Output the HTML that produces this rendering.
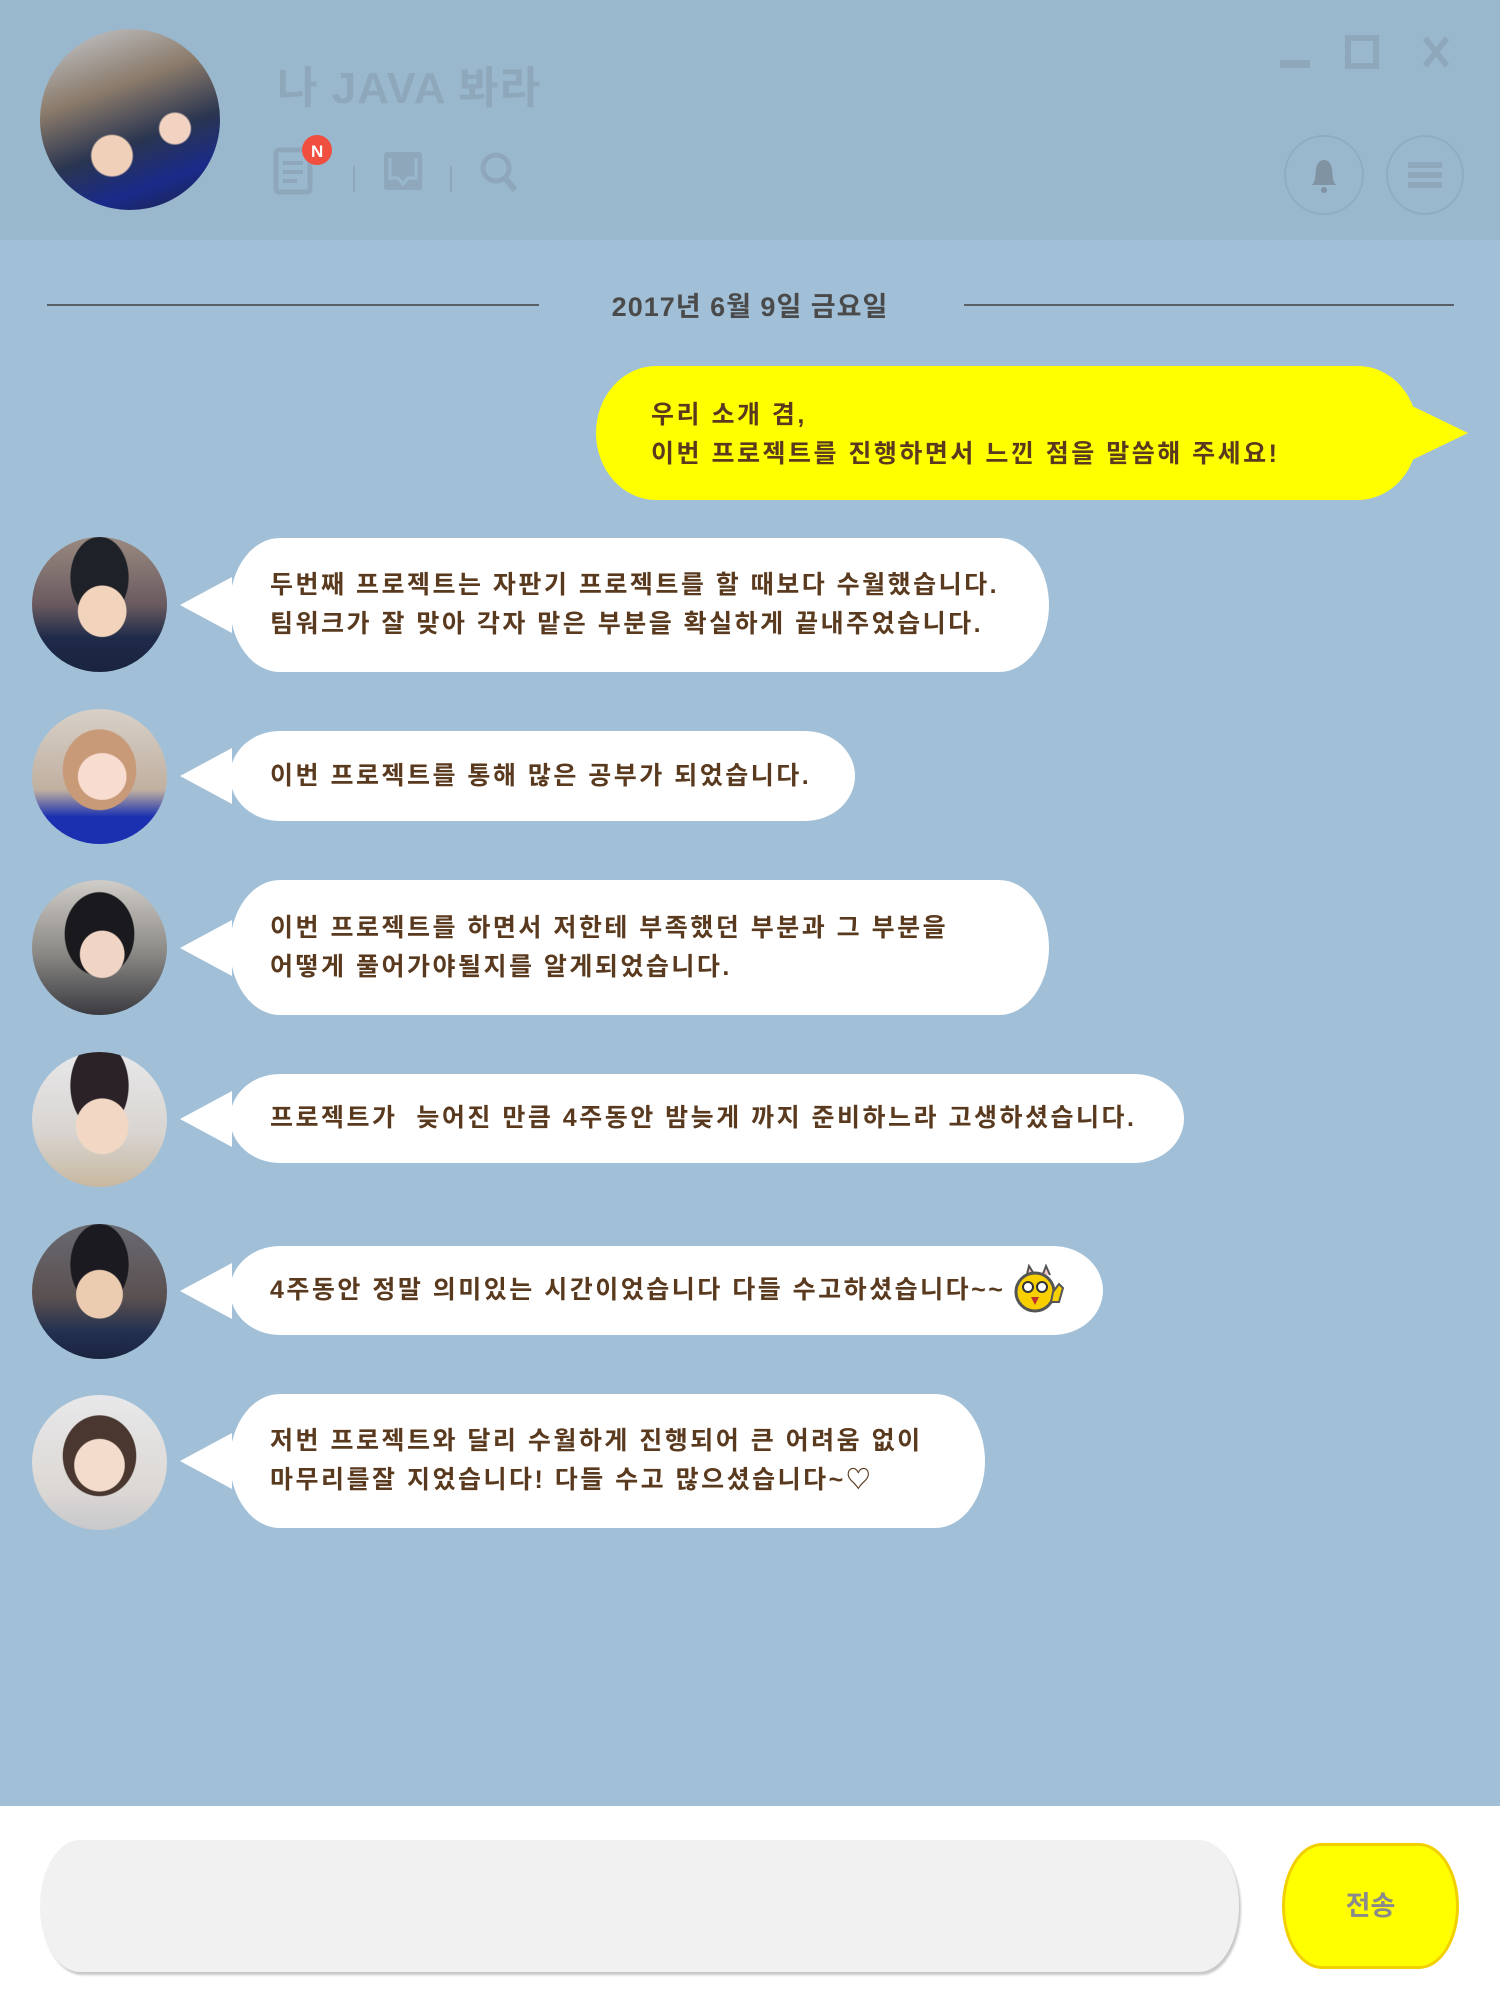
<!DOCTYPE html><html><head><meta charset="utf-8"><style>
*{margin:0;padding:0;box-sizing:border-box}
body{width:1500px;height:2000px;background:#a1c0d8;position:relative;overflow:hidden;font-family:"Liberation Sans","Noto Sans CJK KR",sans-serif}
.hdr{position:absolute;left:0;top:0;width:1500px;height:240px;background:#99b8ce}
.abs{position:absolute}
.av{position:absolute;width:135px;height:135px;border-radius:50%;overflow:hidden}
.b{position:absolute;left:230px;background:#fff;border-radius:50px/50%;color:#5a3a1e;font-weight:700;font-size:25px;line-height:39px;padding-left:40px;display:flex;flex-direction:column;justify-content:center;letter-spacing:2.5px;white-space:nowrap}
.b:before{content:"";position:absolute;left:-50px;top:50%;margin-top:-28px;border-right:52px solid #fff;border-top:28px solid transparent;border-bottom:28px solid transparent}
</style></head><body>
<div class="hdr"></div>
<div class="av" style="left:40px;top:29px;width:180px;height:181px;background:radial-gradient(circle at 40% 70%,#f0d0b8 0 12%,transparent 13%),radial-gradient(circle at 75% 55%,#f2d2c0 0 9%,transparent 10%),linear-gradient(160deg,#c8ccd2 0%,#8a7a6a 35%,#2a3550 60%,#1a2a8a 80%,#1c2440 100%)"></div>
<div class="abs" style="left:277px;top:52px;font-size:44px;font-weight:700;color:#8ea7ba;letter-spacing:1px">나 JAVA 봐라</div>
<svg class="abs" style="left:270px;top:130px" width="300" height="70">
<rect x="6" y="20" width="34" height="42" rx="3" fill="none" stroke="#8ea7ba" stroke-width="5"/>
<path d="M13 33h20M13 42h20M13 51h14" stroke="#8ea7ba" stroke-width="4"/>
<circle cx="47" cy="20" r="15" fill="#f04e3e"/><text x="41" y="27" font-size="17" font-weight="700" fill="#fff" font-family="Liberation Sans">N</text>
<path d="M84 36v26M181 36v26" stroke="#8ea7ba" stroke-width="2"/>
<rect x="114" y="22" width="38" height="38" rx="3" fill="#8ea7ba"/><path d="M120 28v20h8l5 6 5-6h8v-20" fill="none" stroke="#99b8ce" stroke-width="3"/>
<circle cx="226" cy="38" r="13" fill="none" stroke="#8ea7ba" stroke-width="5"/><path d="M235 48l10 12" stroke="#8ea7ba" stroke-width="6"/>
</svg>
<svg class="abs" style="left:1270px;top:30px" width="200" height="50">
<rect x="10" y="30" width="30" height="8" fill="#8ea7ba"/>
<rect x="78" y="8" width="28" height="28" fill="none" stroke="#8ea7ba" stroke-width="6"/>
<path d="M155 8l22 28M177 8l-22 28" stroke="#8ea7ba" stroke-width="6"/>
</svg>
<div class="abs" style="left:1284px;top:135px;width:80px;height:80px;border-radius:50%;border:2px solid #8eacc2"></div>
<svg class="abs" style="left:1284px;top:135px" width="80" height="80"><path d="M28 50c4-4 3-10 4-16 1-6 4-9 8-9s7 3 8 9c1 6 0 12 4 16z" fill="#7f93a3"/><circle cx="40" cy="55" r="3" fill="#7f93a3"/></svg>
<div class="abs" style="left:1386px;top:135px;width:78px;height:80px;border-radius:50%;border:2px solid #8eacc2"></div>
<svg class="abs" style="left:1386px;top:135px" width="78" height="80"><path d="M22 30h34M22 40h34M22 50h34" stroke="#8ea7ba" stroke-width="6"/></svg>

<div class="abs" style="left:47px;top:304px;width:492px;height:2px;background:#5a6068"></div>
<div class="abs" style="left:964px;top:304px;width:490px;height:2px;background:#5a6068"></div>
<div class="abs" style="left:600px;top:285px;width:300px;text-align:center;font-size:27px;font-weight:700;color:#4a4a4a;letter-spacing:1px">2017년 6월 9일 금요일</div>

<div class="abs" style="left:596px;top:366px;width:822px;height:134px;background:#ffff00;border-radius:60px/50%;color:#5a3a1e;font-weight:700;font-size:25px;line-height:39px;padding:30px 0 0 55px;letter-spacing:2.5px;white-space:nowrap">우리 소개 겸,<br>이번 프로젝트를 진행하면서 느낀 점을 말씀해 주세요!</div>
<div class="abs" style="left:1410px;top:405px;border-left:58px solid #ffff00;border-top:28px solid transparent;border-bottom:28px solid transparent"></div>

<div class="av" style="left:32px;top:537px;background:radial-gradient(ellipse at 52% 55%,#f2d4bc 0 24%,transparent 25%),radial-gradient(ellipse at 50% 30%,#1e2228 0 30%,transparent 31%),linear-gradient(180deg,#9a8a80 0%,#6a5a60 50%,#1e2a48 75%,#1a2440 100%)"></div>
<div class="b" style="top:538px;width:819px;height:134px">두번째 프로젝트는 자판기 프로젝트를 할 때보다 수월했습니다.<br>팀워크가 잘 맞아 각자 맡은 부분을 확실하게 끝내주었습니다.</div>

<div class="av" style="left:32px;top:709px;background:radial-gradient(ellipse at 52% 50%,#f8dcd0 0 24%,transparent 25%),radial-gradient(ellipse at 50% 45%,#c89a78 0 38%,transparent 39%),linear-gradient(180deg,#d8d0c8 0%,#c0b0a0 60%,#1a30b0 80%,#1a30b0 100%)"></div>
<div class="b" style="top:731px;width:625px;height:90px">이번 프로젝트를 통해 많은 공부가 되었습니다.</div>

<div class="av" style="left:32px;top:880px;background:radial-gradient(ellipse at 52% 55%,#f0d4c4 0 22%,transparent 23%),radial-gradient(ellipse at 50% 40%,#1a1a1e 0 36%,transparent 37%),linear-gradient(180deg,#d0ccc8 0%,#8a8884 55%,#3a3a40 100%)"></div>
<div class="b" style="top:880px;width:819px;height:135px">이번 프로젝트를 하면서 저한테 부족했던 부분과 그 부분을<br>어떻게 풀어가야될지를 알게되었습니다.</div>

<div class="av" style="left:32px;top:1052px;background:radial-gradient(ellipse at 52% 55%,#f2d8c4 0 26%,transparent 27%),radial-gradient(ellipse at 50% 25%,#2a2226 0 30%,transparent 31%),linear-gradient(180deg,#e8e8ea 0%,#d8d4d0 60%,#c8b8a0 100%)"></div>
<div class="b" style="top:1074px;width:954px;height:89px">프로젝트가 &nbsp;늦어진 만큼 4주동안 밤늦게 까지 준비하느라 고생하셨습니다.</div>

<div class="av" style="left:32px;top:1224px;background:radial-gradient(ellipse at 50% 52%,#ecccb0 0 24%,transparent 25%),radial-gradient(ellipse at 50% 30%,#1a1a20 0 30%,transparent 31%),linear-gradient(180deg,#6a6a72 0%,#5a5050 55%,#223050 80%,#1a2440 100%)"></div>
<div class="b" style="top:1246px;width:873px;height:89px">4주동안 정말 의미있는 시간이었습니다 다들 수고하셨습니다~~</div>
<svg class="abs" style="left:1013px;top:1264px" width="52" height="52"><path d="M14 10l2-8 5 8M30 10l3-8 4 9" fill="#f8c8c8" stroke="#555" stroke-width="2"/><circle cx="22" cy="28" r="19" fill="#f8d000" stroke="#555" stroke-width="3"/><circle cx="15" cy="23" r="5" fill="#fff" stroke="#333" stroke-width="2"/><circle cx="29" cy="23" r="5" fill="#fff" stroke="#333" stroke-width="2"/><path d="M18 33l4 8 4-8z" fill="#c03030"/><path d="M40 28l6-8 4 4-4 14h-8z" fill="#f8d000" stroke="#555" stroke-width="2"/></svg>

<div class="av" style="left:32px;top:1395px;background:radial-gradient(ellipse at 50% 52%,#f4dccc 0 26%,transparent 27%),radial-gradient(ellipse at 50% 45%,#4a3830 0 38%,transparent 39%),linear-gradient(180deg,#e8e8ea 0%,#dcd8d4 70%,#c8c8cc 100%)"></div>
<div class="b" style="top:1394px;width:755px;height:134px">저번 프로젝트와 달리 수월하게 진행되어 큰 어려움 없이<br>마무리를잘 지었습니다! 다들 수고 많으셨습니다~♡</div>

<div class="abs" style="left:0;top:1806px;width:1500px;height:194px;background:#fff"></div>
<div class="abs" style="left:40px;top:1840px;width:1199px;height:132px;background:#f1f1f1;border-radius:40px/50%;box-shadow:2px 3px 2px #c8c8c8"></div>
<div class="abs" style="left:1282px;top:1843px;width:177px;height:126px;background:#ffff00;border:3px solid #f2d000;border-radius:40px/50%;text-align:center;line-height:120px;font-size:27px;font-weight:700;color:#8a8a8a">전송</div>
</body></html>
